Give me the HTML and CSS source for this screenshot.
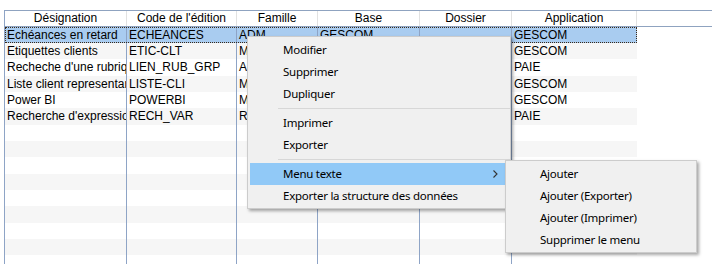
FILE: index.html
```html
<!DOCTYPE html>
<html lang="fr">
<head>
    <meta charset="UTF-8" />
    <title>Éditions</title>
    <link rel="stylesheet" href="styles.css">
</head>
<body>
    <div class="grid">
        <div class="head">
            <div class="hcell c1">Désignation</div>
            <div class="hcell c2">Code de l'édition</div>
            <div class="hcell c3">Famille</div>
            <div class="hcell c4">Base</div>
            <div class="hcell c5">Dossier</div>
            <div class="hcell c6">Application</div>
            <div class="hfill"></div>
        </div>
        <div class="rows">
            <div class="row selected">
                <div class="cell c1">Echéances en retard</div>
                <div class="cell c2">ECHEANCES</div>
                <div class="cell c3">ADM</div>
                <div class="cell c4">GESCOM</div>
                <div class="cell c5"></div>
                <div class="cell c6">GESCOM</div>
            </div>
            <div class="row">
                <div class="cell c1">Etiquettes clients</div>
                <div class="cell c2">ETIC-CLT</div>
                <div class="cell c3">MKT</div>
                <div class="cell c4">GESCOM</div>
                <div class="cell c5"></div>
                <div class="cell c6">GESCOM</div>
            </div>
            <div class="row">
                <div class="cell c1">Recheche d'une rubrique</div>
                <div class="cell c2">LIEN_RUB_GRP</div>
                <div class="cell c3">ADM</div>
                <div class="cell c4">PAIE</div>
                <div class="cell c5"></div>
                <div class="cell c6">PAIE</div>
            </div>
            <div class="row">
                <div class="cell c1">Liste client representant</div>
                <div class="cell c2">LISTE-CLI</div>
                <div class="cell c3">MKT</div>
                <div class="cell c4">GESCOM</div>
                <div class="cell c5"></div>
                <div class="cell c6">GESCOM</div>
            </div>
            <div class="row">
                <div class="cell c1">Power BI</div>
                <div class="cell c2">POWERBI</div>
                <div class="cell c3">MKT</div>
                <div class="cell c4">GESCOM</div>
                <div class="cell c5"></div>
                <div class="cell c6">GESCOM</div>
            </div>
            <div class="row">
                <div class="cell c1">Recherche d'expression</div>
                <div class="cell c2">RECH_VAR</div>
                <div class="cell c3">RH</div>
                <div class="cell c4">PAIE</div>
                <div class="cell c5"></div>
                <div class="cell c6">PAIE</div>
            </div>
            <div class="row"><div class="cell c1"></div><div class="cell c2"></div><div class="cell c3"></div><div class="cell c4"></div><div class="cell c5"></div><div class="cell c6"></div></div>
            <div class="row"><div class="cell c1"></div><div class="cell c2"></div><div class="cell c3"></div><div class="cell c4"></div><div class="cell c5"></div><div class="cell c6"></div></div>
            <div class="row"><div class="cell c1"></div><div class="cell c2"></div><div class="cell c3"></div><div class="cell c4"></div><div class="cell c5"></div><div class="cell c6"></div></div>
            <div class="row"><div class="cell c1"></div><div class="cell c2"></div><div class="cell c3"></div><div class="cell c4"></div><div class="cell c5"></div><div class="cell c6"></div></div>
            <div class="row"><div class="cell c1"></div><div class="cell c2"></div><div class="cell c3"></div><div class="cell c4"></div><div class="cell c5"></div><div class="cell c6"></div></div>
            <div class="row"><div class="cell c1"></div><div class="cell c2"></div><div class="cell c3"></div><div class="cell c4"></div><div class="cell c5"></div><div class="cell c6"></div></div>
            <div class="row"><div class="cell c1"></div><div class="cell c2"></div><div class="cell c3"></div><div class="cell c4"></div><div class="cell c5"></div><div class="cell c6"></div></div>
            <div class="row"><div class="cell c1"></div><div class="cell c2"></div><div class="cell c3"></div><div class="cell c4"></div><div class="cell c5"></div><div class="cell c6"></div></div>
            <div class="row"><div class="cell c1"></div><div class="cell c2"></div><div class="cell c3"></div><div class="cell c4"></div><div class="cell c5"></div><div class="cell c6"></div></div>
        </div>
    </div>

    <div class="menu context-menu">
        <div class="item">Modifier</div>
        <div class="item">Supprimer</div>
        <div class="item">Dupliquer</div>
        <div class="sep"></div>
        <div class="item">Imprimer</div>
        <div class="item">Exporter</div>
        <div class="sep"></div>
        <div class="item active">
            <span>Menu texte</span>
            <svg class="arrow" width="5" height="8" viewBox="0 0 5 8"><polyline points="0.5,0.5 4,4 0.5,7.5" fill="none" stroke="#333" stroke-width="1.1"/></svg>
        </div>
        <div class="item">Exporter la structure des données</div>
    </div>

    <div class="menu sub-menu">
        <div class="item">Ajouter</div>
        <div class="item">Ajouter (Exporter)</div>
        <div class="item">Ajouter (Imprimer)</div>
        <div class="item">Supprimer le menu</div>
    </div>
</body>
</html>
```

FILE: styles.css
```css
body {
    margin: 0;
    background: #ffffff;
    font-family: 'Liberation Sans', Arial, sans-serif;
    font-size: 12px;
    color: #000000;
    height: 264px;
    overflow: hidden;
}

.grid {
    margin: 10px 0 0 4px;
    border-left: 1px solid #8ea4c6;
}

.head {
    display: flex;
    height: 15px;
    border-top: 1px solid #8fa3c0;
    border-bottom: 1px solid #8fa3c0;
}

.hcell {
    box-sizing: border-box;
    border-right: 1px solid #e2e2e2;
    text-align: center;
    line-height: 15px;
    white-space: nowrap;
    overflow: hidden;
}

.hfill {
    flex: 1;
}

.c1 { width: 122px; }
.c2 { width: 110px; }
.c3 { width: 81px; }
.c4 { width: 102px; }
.c5 { width: 92px; }
.c6 { width: 125px; }

.row {
    display: flex;
    width: 632px;
    height: 16px;
    background: #ffffff;
}

.row:nth-child(3n) {
    height: 17px;
}

.row:nth-child(even) {
    background: #f6f6f6;
}

.row.selected {
    background: #a9ccf0;
    outline: 1px dotted #3a2a1a;
    outline-offset: -1px;
}

.cell {
    box-sizing: border-box;
    padding-left: 2px;
    line-height: 16px;
    white-space: nowrap;
    overflow: hidden;
    border-right: 1px solid #8ea4c6;
}

.cell.c6 {
    border-right: none;
}

.menu {
    position: absolute;
    box-sizing: border-box;
    background: #f0f0f0;
    border: 1px solid #cccccc;
    box-shadow: 2px 2px 3px rgba(0, 0, 0, 0.35);
    padding: 2px 2px 1px 2px;
    font-family: 'Noto Sans', 'Open Sans', sans-serif;
    font-size: 11.5px;
    letter-spacing: -0.25px;
    color: #000000;
}

.context-menu {
    left: 247px;
    top: 36px;
    width: 264px;
    padding-right: 4px;
}

.sub-menu {
    left: 505px;
    top: 160px;
    width: 192px;
}

.item {
    display: flex;
    align-items: center;
    justify-content: space-between;
    box-sizing: border-box;
    height: 22px;
    padding: 0 8px 1px 33px;
    white-space: nowrap;
}

.sub-menu .item {
    padding-left: 32px;
}

.item.active {
    background: #91c9f7;
}

.arrow {
    display: block;
}

.sep {
    height: 7px;
    margin-left: 28px;
    margin-right: -4px;
    background: linear-gradient(#d7d7d7, #d7d7d7) no-repeat 0 3px / 100% 1px;
}
```
